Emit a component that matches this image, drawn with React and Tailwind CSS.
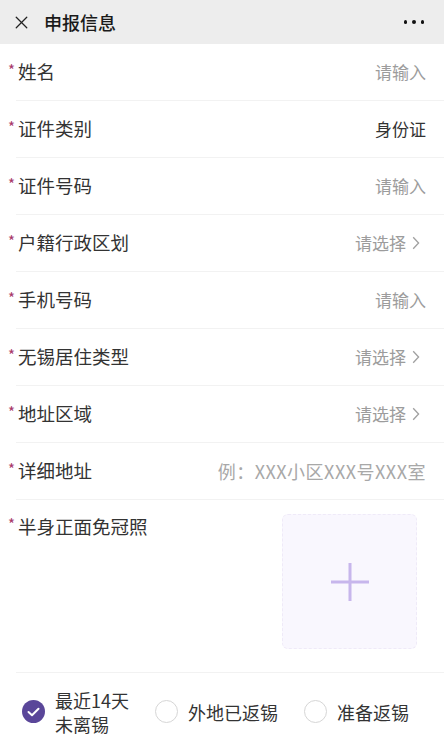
import { X } from 'lucide-react'

const font = { fontFamily: '"Noto Sans CJK SC", "Noto Sans", sans-serif' }

const rows = [
  { label: '姓名', value: '请输入' },
  { label: '证件类别', value: '身份证', filled: true },
  { label: '证件号码', value: '请输入' },
  { label: '户籍行政区划', value: '请选择', arrow: true },
  { label: '手机号码', value: '请输入' },
  { label: '无锡居住类型', value: '请选择', arrow: true },
  { label: '地址区域', value: '请选择', arrow: true },
  { label: '详细地址', value: '例：XXX小区XXX号XXX室', light: true }
]

function Label({ text }) {
  return (
    <div className="flex items-center">
      <span className="text-[15px] leading-none text-[#a8386a] w-[10px] -mt-[6px]">*</span>
      <span className="text-[18.5px] text-[#333]">{text}</span>
    </div>
  )
}

function Chevron() {
  return (
    <svg width="8" height="14" viewBox="0 0 8 14" className="ml-[6px]">
      <path d="M1.2 1.2 L6.6 7 L1.2 12.8" fill="none" stroke="#a0a0a0" strokeWidth="1.3" />
    </svg>
  )
}

function Radio({ checked, children, textClass = '' }) {
  return (
    <div className="flex items-center gap-[10px]">
      {checked ? (
        <div className="w-[23px] h-[23px] rounded-full bg-[#5a4699] flex items-center justify-center">
          <svg width="13" height="10" viewBox="0 0 13 10">
            <path d="M1.5 5 L5 8.2 L11.5 1.8" fill="none" stroke="#fff" strokeWidth="2" strokeLinecap="round" strokeLinejoin="round" />
          </svg>
        </div>
      ) : (
        <div className="w-[23px] h-[23px] rounded-full border border-[#d6d6d6]" />
      )}
      <div className={'text-[18px] leading-[24px] text-[#333] ' + textClass}>{children}</div>
    </div>
  )
}

export default function App() {
  return (
    <div style={font} className="w-[444px] h-[750px] bg-white overflow-hidden">
      <div className="h-[44px] bg-[#ededed] flex items-center pl-[11px] pr-[20px]">
        <X size={21} strokeWidth={1.5} color="#222" />
        <span className="ml-[12px] text-[18px] font-medium text-[#1a1a1a]">申报信息</span>
        <div className="ml-auto flex gap-[5px]">
          <span className="w-[3.5px] h-[3.5px] rounded-full bg-[#111]" />
          <span className="w-[3.5px] h-[3.5px] rounded-full bg-[#111]" />
          <span className="w-[3.5px] h-[3.5px] rounded-full bg-[#111]" />
        </div>
      </div>

      {rows.map(r => (
        <div key={r.label}>
          <div className={'h-[56px] flex items-center pl-[8px] ' + (r.arrow ? 'pr-[24px]' : 'pr-[18px]')}>
            <Label text={r.label} />
            <div className="ml-auto flex items-center">
              <span
                className={
                  r.filled
                    ? 'text-[17px] text-[#333]'
                    : r.light
                      ? 'text-[18px] tracking-[0.5px] text-[#a8a8a8]'
                      : 'text-[17px] text-[#9c9c9c]'
                }
              >
                {r.value}
              </span>
              {r.arrow && <Chevron />}
            </div>
          </div>
          <div className="ml-4 h-px bg-[#f2f2f2]" />
        </div>
      ))}

      <div className="h-[172px] flex pl-[8px] pr-[27px]">
        <div className="pt-[13px]">
          <Label text="半身正面免冠照" />
        </div>
        <div className="ml-auto mt-[14px] w-[135px] h-[135px] rounded-[6px] border border-dashed border-[#efeaf8] bg-[#f9f7fe] flex items-center justify-center">
          <svg width="40" height="40" viewBox="0 0 40 40">
            <path d="M20 1 V39 M1 20 H39" stroke="#c7b6ec" strokeWidth="3" />
          </svg>
        </div>
      </div>
      <div className="ml-4 h-px bg-[#f2f2f2]" />

      <div className="h-[77px] flex items-center pl-[22px] gap-[26px]">
        <Radio checked textClass="w-[74px]">最近14天 未离锡</Radio>
        <Radio>外地已返锡</Radio>
        <Radio>准备返锡</Radio>
      </div>
    </div>
  )
}
